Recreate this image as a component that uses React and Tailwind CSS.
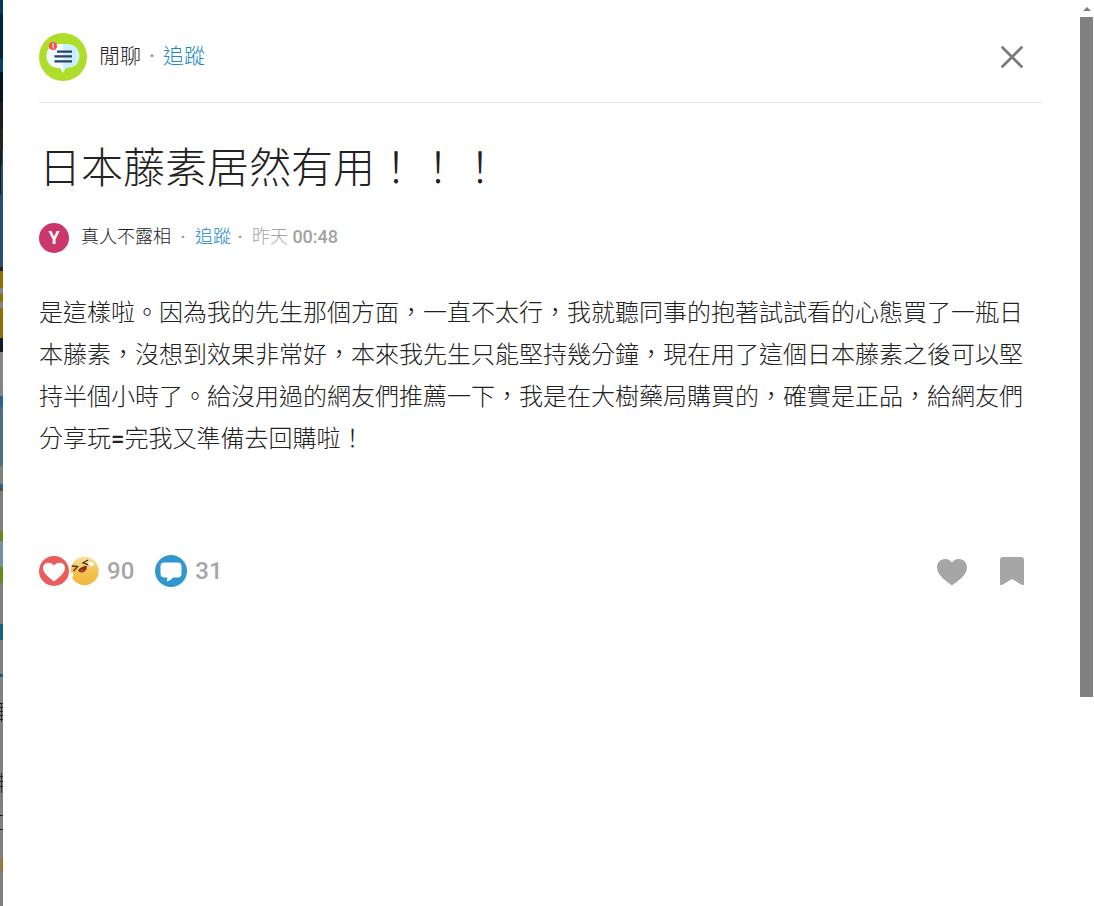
const BACKDROP = [
  [0, 14, '#01395b'], [14, 45, '#012740'], [59, 13, '#01456a'], [72, 30, '#011420'],
  [102, 28, '#191c20'], [130, 20, '#20271a'], [150, 50, '#18201f'], [267, 4, '#20262c'],
  [271, 17, '#8c7200'], [288, 6, '#85857d'], [294, 8, '#8c7200'], [302, 6, '#85857d'],
  [308, 30, '#8c7200'], [338, 14, '#111c28'], [352, 44, '#858585'], [396, 11, '#2b6196'],
  [407, 59, '#4b7086'], [484, 4, '#2c6388'], [488, 3, '#5c4a44'], [531, 10, '#66881c'],
  [541, 26, '#74919f'], [567, 16, '#66881c'], [624, 16, '#1d5f85'], [674, 3, '#155a7e'],
]

const TEXT_EDGES = [703, 707, 711, 715, 719, 776, 781, 786, 815, 829]

function Backdrop() {
  return (
    <div aria-hidden="true" className="relative w-[3px] shrink-0 overflow-hidden bg-[#808080]">
      <svg className="absolute top-0 left-0" width="3" height="906" viewBox="0 0 3 906" shapeRendering="crispEdges">
        {BACKDROP.map(([y, h, fill]) => (
          <rect key={y} x="0" y={y} width="3" height={h} fill={fill} />
        ))}
        <path d="M0 267V210L2 150H3V267Z" fill="#284d70" />
        {TEXT_EDGES.map((y) => (
          <rect key={y} x="0" y={y} width="3" height="1" fill="#1c1c1c" />
        ))}
        <path d="M1 704V722M1 773V793" stroke="#333" strokeWidth="1" />
        <rect x="1" y="858" width="2" height="15" fill="#a4731c" />
      </svg>
    </div>
  )
}

function ForumIcon() {
  return (
    <svg className="size-12 shrink-0" viewBox="0 0 48 48" aria-hidden="true">
      <circle cx="24" cy="24" r="24" fill="#aedd2b" />
      <path d="M24 11h-4C12 11 7.500 16 7.500 23S12 35 20 35h1l3 5Z" fill="#effcff" />
      <path d="M24 11h4c8 0 12.500 5 12.500 12S36 35 28 35h-1l-3 5Z" fill="#cdf1fc" />
      <path d="M18 18.700h15M15.500 23.300H33M15.500 28.300H33" stroke="#2e3f66" strokeWidth="2.300" />
      <circle cx="14" cy="13" r="4" fill="#f4504e" />
      <path d="M13.300 11.200l.9-.6V15.500" stroke="#fff" strokeWidth="1" fill="none" />
    </svg>
  )
}

function LoveIcon() {
  return (
    <svg className="size-[30px]" viewBox="0 0 30 30" aria-hidden="true">
      <circle cx="15" cy="15" r="15" fill="#ea5c5c" />
      <path d="M15 25.500C12.500 23 4 18 4 12c0-3 2.200-5.300 5.300-5.300 2.500 0 4.700 1.300 5.700 3 1-1.700 3.200-3 5.700-3C23.800 6.700 26 9 26 12c0 6-8.500 11-11 13.500Z" fill="#fff" />
    </svg>
  )
}

function LaughIcon() {
  return (
    <svg className="size-[30px]" viewBox="0 0 30 30" aria-hidden="true">
      <defs>
        <linearGradient id="face" x1="0" y1="0" x2="0" y2="1">
          <stop offset="0" stopColor="#fae09b" />
          <stop offset=".5" stopColor="#f5c453" />
          <stop offset="1" stopColor="#efb63b" />
        </linearGradient>
      </defs>
      <circle cx="15.500" cy="15" r="14.200" fill="url(#face)" />
      <path d="M9.300 14c1.700-2 4.700-3.700 8.200-4.200 1.200 2.700-.8 5.700-3.700 6.500-2.500.6-4.500-.4-4.500-2.300Z" fill="#813019" />
      <path d="M10.500 15c1.500-1.500 3.300-1.700 4.700-1-1.500 1.800-3.300 2.200-4.700 1Z" fill="#bd4e25" />
      <path d="M3 10l5.500.5-4 4.500M19 4l-5 2.800 5.500 2" stroke="#493326" strokeWidth="1.300" fill="none" />
      <path d="M19 7.500c1.500-2 5-2 5.500.5.500 3-4.500 3-5.500-.5ZM3 16c1.800 1.500 2 4.500 0 5.300-2.500 0-2.500-3.500 0-5.300Z" fill="#fff" />
    </svg>
  )
}

function CommentIcon() {
  return (
    <svg className="size-8" viewBox="0 0 32 32" aria-hidden="true">
      <circle cx="16" cy="16" r="16" fill="#3397cf" />
      <path d="M9.500 7.500h13a4 4 0 0 1 4 4v7a4 4 0 0 1-4 4H18c-1.500 1.800-3.500 3.300-6 4l.3-4H9.500a4 4 0 0 1-4-4v-7a4 4 0 0 1 4-4Z" fill="#fff" />
    </svg>
  )
}

export default function App() {
  return (
    <div className="flex min-h-screen bg-white font-['Roboto','Noto_Sans_CJK_TC',sans-serif] font-light text-[#222]">
      <Backdrop />
      <main className="min-w-0 flex-1 pr-[38px] pl-9">
        <header className="flex h-[103px] items-center border-b border-[#e3e3e3] pt-3 pr-4">
          <ForumIcon />
          <div className="ml-3 flex flex-1 items-center pb-0.5 text-[21px] leading-8">
            <span>閒聊</span>
            <span className="w-[22px] text-center font-medium text-[#999]">·</span>
            <button type="button" className="text-[#2288c5]">追蹤</button>
          </div>
          <button type="button" aria-label="關閉" className="flex size-7 items-center justify-center">
            <svg className="size-7" viewBox="0 0 28 28" fill="none" stroke="#7b7b7b" strokeWidth="2.800" strokeLinecap="round" aria-hidden="true">
              <path d="M4.500 4.500l19 19M23.500 4.500l-19 19" />
            </svg>
          </button>
        </header>

        <article className="pt-[34px]">
          <h1 className="text-[42px] leading-[64px]">日本藤素居然有用！！！</h1>
          <div className="mt-[22px] flex items-center text-lg leading-7">
            <span className="flex size-[30px] shrink-0 items-center justify-center rounded-full bg-[#cc3769] font-bold text-white">Y</span>
            <div className="ml-3 flex items-center pb-0.5">
              <span>真人不露相</span>
              <span className="w-6 text-center font-medium text-[#999]">·</span>
              <button type="button" className="text-[#2288c5]">追蹤</button>
              <span className="mr-[3px] w-[18px] text-center font-medium text-[#999]">·</span>
              <time className="text-[#a2a2a2]">昨天 <span className="font-medium">00:48</span></time>
            </div>
          </div>
          <p className="mt-[39px] text-2xl leading-[42px]">
            是這樣啦。因為我的先生那個方面，一直不太行，我就聽同事的抱著試試看的心態買了一瓶日本藤素，沒想到效果非常好，本來我先生只能堅持幾分鐘，現在用了這個日本藤素之後可以堅持半個小時了。給沒用過的網友們推薦一下，我是在大樹藥局購買的，確實是正品，給網友們分享玩<span className="font-medium">=</span>完我又準備去回購啦！
          </p>
        </article>

        <footer className="mt-[95px] flex items-center text-2xl leading-8 font-medium text-[#a6a6a6]">
          <LoveIcon />
          <LaughIcon />
          <span className="ml-2">90</span>
          <span className="ml-[21px] flex items-center gap-2"><CommentIcon />31</span>
          <div className="ml-auto flex items-center gap-[30px] pr-4">
            <button type="button" aria-label="喜歡">
              <svg className="size-8" viewBox="0 0 32 32" fill="#a6a6a6" aria-hidden="true">
                <path d="M16 30.500C12 27 1 21 1 12.500 1 7.500 4.500 4 9 4c3 0 5.500 1.300 7 3.500C17.500 5.300 20 4 23 4c4.500 0 8 3.500 8 8.500 0 8.500-11 14.500-15 18Z" />
              </svg>
            </button>
            <button type="button" aria-label="收藏">
              <svg className="size-7" viewBox="0 0 28 28" fill="#a6a6a6" aria-hidden="true">
                <path d="M5 0h18a3 3 0 0 1 3 3v24q0 2-2 1L14 22 4 28q-2 1-2-1V3a3 3 0 0 1 3-3Z" />
              </svg>
            </button>
          </div>
        </footer>
      </main>
      <div aria-hidden="true" className="mr-px flex w-[13px] shrink-0 flex-col">
        <div className="flex h-[17px] items-center justify-center">
          <svg width="8" height="4" viewBox="0 0 8 4"><path d="M4 0L8 4H0Z" fill="#7b7b7b" /></svg>
        </div>
        <div className="h-[75vh] bg-[#808080]" />
      </div>
    </div>
  )
}
